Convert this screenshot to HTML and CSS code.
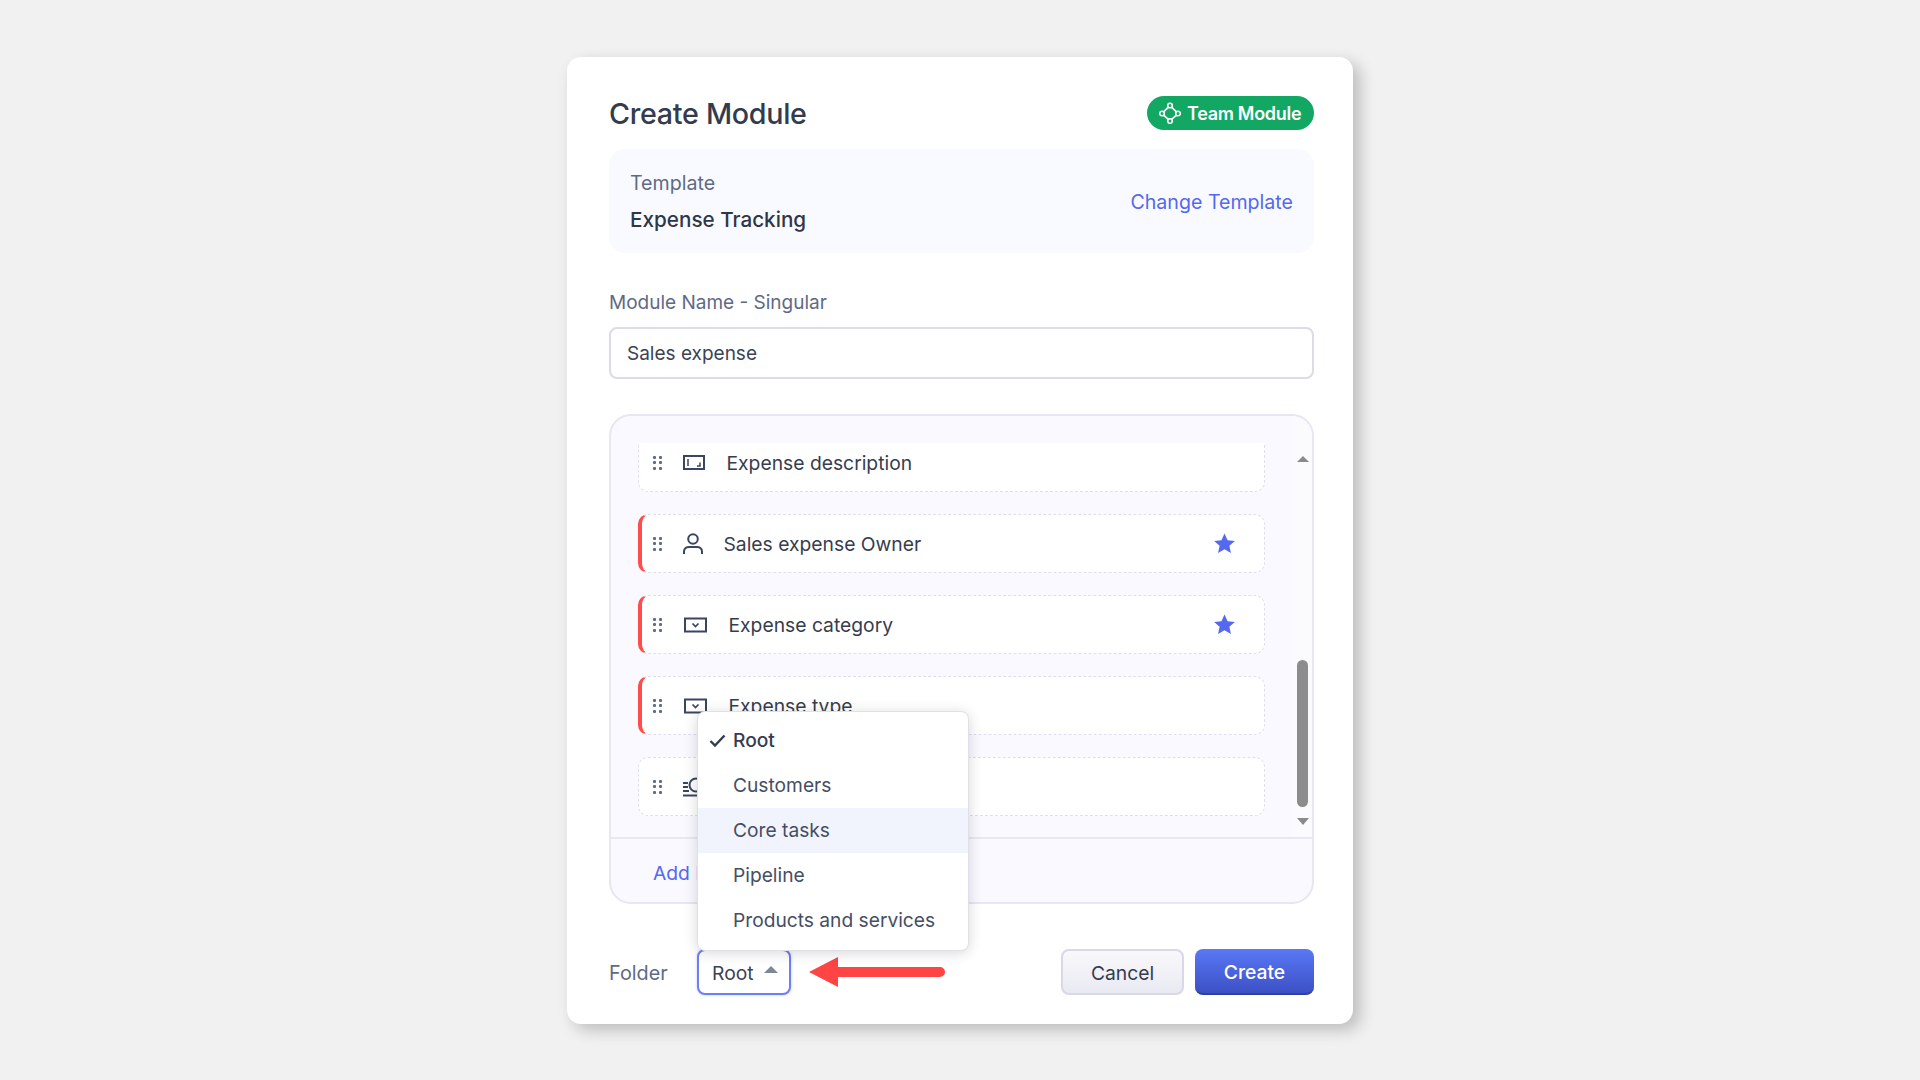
FILE: index.html
```html
<!DOCTYPE html>
<html lang="en">
<head>
    <meta charset="UTF-8">
    <title>Create Module</title>
    <link rel="stylesheet" href="styles.css">
</head>
<body>
    <div class="card">
        <div class="card-head">
            <h1>Create Module</h1>
            <span class="badge">
                <svg class="badge-icon" width="22" height="22" viewBox="0 0 22 22" fill="none" stroke="#fff" stroke-width="1.6">
                    <circle cx="11" cy="3.5" r="2.3"/>
                    <circle cx="3" cy="11.5" r="2.3"/>
                    <circle cx="19" cy="11.5" r="2.3"/>
                    <circle cx="11" cy="19" r="2.3"/>
                    <path d="M9.4 5.2 4.6 9.8M12.6 5.2l4.8 4.6M4.6 13.2l4.8 4.2M17.4 13.2l-4.8 4.2"/>
                </svg>
                <span class="badge-text">Team Module</span>
            </span>
        </div>

        <div class="template-box">
            <div class="template-info">
                <div class="template-label">Template</div>
                <div class="template-name">Expense Tracking</div>
            </div>
            <a class="link template-link">Change Template</a>
        </div>

        <label class="name-label" for="moduleName">Module Name - Singular</label>
        <input class="name-input" id="moduleName" type="text" value="Sales expense">

        <div class="fields">
            <div class="fields-body">
                <div class="fields-clip">
                    <div class="field-list">
                        <div class="field-row">
                            <span class="dots"><i></i><i></i><i></i><i></i><i></i><i></i></span>
                            <svg class="icon icon-text" width="22" height="15" viewBox="0 0 22 15" fill="none" stroke="#3a4560" stroke-width="2">
                                <rect x="1" y="1" width="20" height="13"/>
                                <path d="M5 4v7M17 7.500v3.500h-3" stroke-width="1.500"/>
                            </svg>
                            <span class="field-name">Expense description</span>
                        </div>
                        <div class="field-row required">
                            <span class="dots"><i></i><i></i><i></i><i></i><i></i><i></i></span>
                            <svg class="icon icon-user" width="20" height="22" viewBox="0 0 20 22" fill="none" stroke="#3a4560" stroke-width="2">
                                <circle cx="10" cy="6" r="4.800"/>
                                <path d="M1 21v-2.500c0-3 2.500-4.500 5-4.500h8c2.500 0 5 1.500 5 4.500V21"/>
                            </svg>
                            <span class="field-name">Sales expense Owner</span>
                            <svg class="star" width="23" height="23" viewBox="0 0 24 24"><path d="M12 1.500l3.200 7 7.600.8-5.700 5.100 1.600 7.500L12 18.100l-6.700 3.800 1.600-7.500L1.200 9.300l7.600-.8z"/></svg>
                        </div>
                        <div class="field-row required">
                            <span class="dots"><i></i><i></i><i></i><i></i><i></i><i></i></span>
                            <svg class="icon icon-select" width="23" height="16" viewBox="0 0 23 16" fill="none" stroke="#3a4560" stroke-width="2">
                                <rect x="1" y="1.500" width="21" height="13"/>
                                <path d="M8.500 6.500l3 3 3-3" stroke-width="1.700"/>
                            </svg>
                            <span class="field-name">Expense category</span>
                            <svg class="star" width="23" height="23" viewBox="0 0 24 24"><path d="M12 1.500l3.200 7 7.600.8-5.700 5.100 1.600 7.500L12 18.100l-6.700 3.800 1.600-7.500L1.200 9.300l7.600-.8z"/></svg>
                        </div>
                        <div class="field-row required">
                            <span class="dots"><i></i><i></i><i></i><i></i><i></i><i></i></span>
                            <svg class="icon icon-select" width="23" height="16" viewBox="0 0 23 16" fill="none" stroke="#3a4560" stroke-width="2">
                                <rect x="1" y="1.500" width="21" height="13"/>
                                <path d="M8.500 6.500l3 3 3-3" stroke-width="1.700"/>
                            </svg>
                            <span class="field-name">Expense type</span>
                        </div>
                        <div class="field-row">
                            <span class="dots"><i></i><i></i><i></i><i></i><i></i><i></i></span>
                            <svg class="icon icon-text" width="22" height="20" viewBox="0 0 22 20" fill="none" stroke="#3a4560" stroke-width="2">
                                <circle cx="13" cy="8" r="6.500"/>
                                <path d="M0 6h5M0 10h5M0 14h6M0 18.500h20"/>
                            </svg>
                        </div>
                    </div>
                </div>
                <div class="scrollbar">
                    <span class="scroll-arrow up"></span>
                    <span class="scroll-track"><span class="scroll-thumb"></span></span>
                    <span class="scroll-arrow down"></span>
                </div>
            </div>
            <div class="fields-foot">
                <a class="link">Add Field</a>
            </div>
        </div>

        <div class="card-foot">
            <span class="folder-label">Folder</span>
            <div class="folder-select">
                <div class="menu">
                    <div class="menu-item selected">
                        <svg class="check" width="17" height="13" viewBox="0 0 17 13" fill="none" stroke="#333d52" stroke-width="2.400"><path d="M1.500 7l4.500 4.500L15.500 1.500"/></svg>
                        Root
                    </div>
                    <div class="menu-item">Customers</div>
                    <div class="menu-item hover">Core tasks</div>
                    <div class="menu-item">Pipeline</div>
                    <div class="menu-item">Products and services</div>
                </div>
                <span class="folder-value">Root</span>
                <span class="caret"></span>
            </div>
            <svg class="pointer" width="136" height="30" viewBox="0 0 136 30"><path d="M0 15 29 0v10h102a5 5 0 0 1 0 10H29v10z" fill="#ff4444"/></svg>
            <div class="actions">
                <button class="btn btn-cancel">Cancel</button>
                <button class="btn btn-create">Create</button>
            </div>
        </div>
    </div>
</body>
</html>
```

FILE: styles.css
```css
* {
    box-sizing: border-box;
}
body {
    margin: 0;
    height: 100vh;
    display: flex;
    align-items: center;
    justify-content: center;
    background: #f1f1f1;
    font-family: Inter, "Noto Sans", sans-serif;
    font-size: 19.300px;
    color: #3b4356;
}
.card {
    width: 786px;
    height: 967px;
    padding: 39px 39px 29px 42px;
    background: #fff;
    border-radius: 14px;
    box-shadow: 7px 6px 16px rgba(0, 0, 0, 0.22);
}
.card-head {
    display: flex;
    align-items: center;
    justify-content: space-between;
    height: 34px;
}
h1 {
    margin: 0;
    padding-top: 1px;
    font-size: 28.700px;
    font-weight: 500;
    color: #333b4e;
    letter-spacing: -0.3px;
}
.badge {
    display: flex;
    align-items: center;
    gap: 6px;
    width: 167px;
    height: 34px;
    padding-left: 12px;
    border-radius: 17px;
    background: #12a863;
    color: #fff;
    font-size: 18px;
    font-weight: 600;
    letter-spacing: -0.3px;
}
.badge-text {
    padding-top: 2px;
}
.badge-icon {
    flex: none;
}
.template-box {
    display: flex;
    align-items: center;
    justify-content: space-between;
    height: 104px;
    margin-top: 19px;
    padding: 2px 21px 0;
    border-radius: 16px;
    background: #f9faff;
    font-size: 19.600px;
}
.template-label {
    color: #5e6a85;
    margin-bottom: 12px;
}
.template-name {
    color: #2f3648;
    font-size: 20.700px;
    font-weight: 500;
}
.template-link {
    padding-top: 1px;
}
.link {
    color: #5468f0;
}
.name-label {
    display: block;
    margin-top: 38px;
    line-height: 24px;
    color: #5e6a85;
    font-size: 19px;
}
.name-input {
    display: block;
    width: 100%;
    height: 52px;
    margin-top: 12px;
    padding: 2px 16px 0;
    border: 2px solid #dcdce8;
    border-radius: 8px;
    font: inherit;
    font-size: 19px;
    color: #3b4356;
}
.fields {
    height: 490px;
    margin-top: 35px;
    border: 2px solid #e6e6f4;
    border-radius: 22px;
    background: #f9f9ff;
    overflow: hidden;
}
.fields-body {
    display: flex;
    justify-content: space-between;
    height: 423px;
    border-bottom: 2px solid #e8e8f4;
}
.fields-clip {
    width: 654px;
    height: 394px;
    margin-top: 27px;
    padding-left: 27px;
    overflow: hidden;
}
.field-list {
    display: flex;
    flex-direction: column;
    gap: 22px;
    margin-top: -10px;
}
.field-row {
    display: flex;
    align-items: center;
    flex: none;
    width: 627px;
    height: 59px;
    padding-left: 14px;
    border: 1.5px dashed #dedeee;
    border-radius: 10px;
    background: #fff;
    color: #363d4e;
}
.field-name {
    padding-top: 2px;
}
.required {
    border-left: 4px solid #ff4d4d;
    padding-left: 11px;
}
.dots {
    display: grid;
    grid-template-columns: 3px 3px;
    gap: 2.500px 2.500px;
    margin-top: 1px;
    margin-right: 21px;
}
.dots i {
    width: 3px;
    height: 3px;
    background: #5e6c8c;
    border-radius: 1px;
}
.icon {
    flex: none;
    margin-top: 1px;
}
.icon-text {
    margin-right: 22px;
}
.icon-user {
    margin-right: 21px;
}
.icon-select {
    margin-left: 1px;
    margin-right: 22px;
}
.star {
    margin-left: auto;
    margin-right: 28px;
    fill: #5468f0;
}
.scrollbar {
    display: flex;
    flex-direction: column;
    align-items: center;
    width: 19px;
    padding-top: 40px;
    background: #fbfbfd;
}
.scroll-arrow {
    width: 0;
    height: 0;
    border-left: 6.500px solid transparent;
    border-right: 6.500px solid transparent;
    flex: none;
}
.scroll-arrow.up {
    border-bottom: 6px solid #8a8a8a;
}
.scroll-arrow.down {
    margin-top: 11px;
    border-top: 7px solid #8a8a8a;
}
.scroll-track {
    display: flex;
    flex-direction: column;
    justify-content: flex-end;
    height: 345px;
}
.scroll-thumb {
    display: block;
    width: 11px;
    height: 147px;
    border-radius: 6px;
    background: #8c8c8c;
}
.fields-foot {
    padding: 22px 0 0 42px;
}
.card-foot {
    display: flex;
    align-items: center;
    height: 46px;
    margin-top: 45px;
}
.folder-label {
    width: 88px;
    padding-top: 2px;
    color: #5e6a85;
    font-size: 19.800px;
}
.folder-select {
    position: relative;
    display: flex;
    align-items: center;
    gap: 10px;
    width: 94px;
    height: 46px;
    padding-left: 13px;
    border: 2px solid #6d7ff2;
    border-radius: 8px;
    box-shadow: 0 0 3px rgba(84, 104, 240, 0.35);
    background: #fff;
}
.folder-value {
    padding-top: 2px;
}
.caret {
    width: 0;
    height: 0;
    margin-top: -4px;
    border-left: 7px solid transparent;
    border-right: 7px solid transparent;
    border-bottom: 7px solid #7f8794;
}
.menu {
    position: absolute;
    left: -2px;
    bottom: 42px;
    width: 272px;
    height: 240px;
    padding-top: 6px;
    border: 1px solid #e0e0ea;
    border-radius: 8px;
    background: #fff;
    box-shadow: 0 2px 14px rgba(0, 0, 0, 0.16);
}
.menu-item {
    position: relative;
    display: flex;
    align-items: center;
    height: 45px;
    padding-left: 35px;
    color: #454e63;
    font-size: 19.200px;
}
.selected {
    font-weight: 500;
    color: #333d52;
}
.hover {
    background: #f2f4fd;
}
.check {
    position: absolute;
    left: 11px;
    top: 16px;
}
.pointer {
    flex: none;
    margin-left: 18px;
}
.actions {
    display: flex;
    gap: 11px;
    margin-left: auto;
}
.btn {
    height: 46px;
    padding-top: 4px;
    border-radius: 8px;
    font: inherit;
    font-weight: 500;
}
.btn-cancel {
    width: 123px;
    border: 2px solid #d8d8e6;
    background: linear-gradient(#f9f9fc, #e9e9f2);
    color: #333b4e;
    font-weight: 400;
}
.btn-create {
    width: 119px;
    border: 0;
    border-bottom: 2px solid #2f409f;
    background: linear-gradient(#5a78f6, #3c50c4);
    color: #fff;
}
```
